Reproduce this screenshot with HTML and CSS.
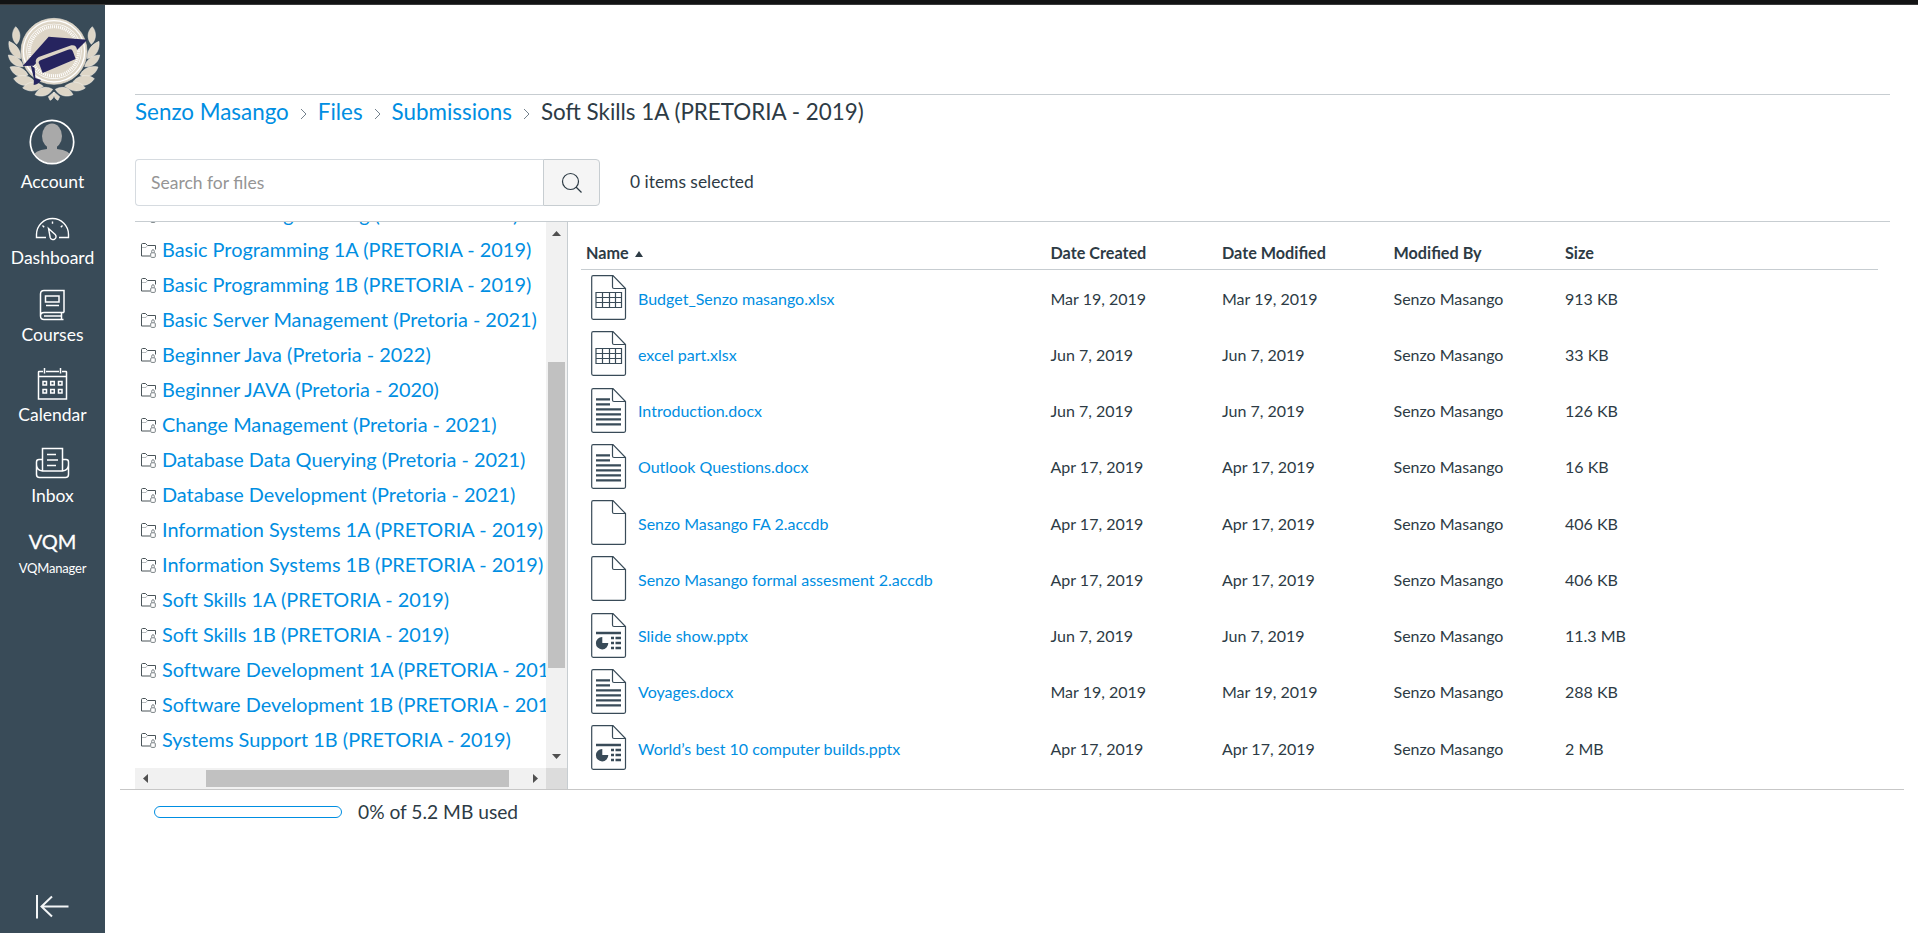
FILE: index.html
```html
<!DOCTYPE html>
<html lang="en">
<head>
<meta charset="utf-8">
<title>Files</title>
<link rel="stylesheet" href="styles.css">
</head>
<body>
<svg width="0" height="0" class="defs">
  <symbol id="folder" viewBox="0 0 15 15"><path d="M9 13H.5V1.700Q.5.5 1.600.5H4.500L6.500 2.500H14.500V6.500" fill="none" stroke="#4a5459"/><path d="M1 4.500H5L6.500 2.500" fill="none" stroke="#9aa1a4" stroke-width=".7"/><rect x="9.700" y="9.800" width="4.600" height="4.600" rx="1" fill="none" stroke="#6a7377" stroke-width=".9"/><path d="M10.700 9.500V8.300a1.300 1.600 0 0 1 2.600 0V9.500" fill="none" stroke="#6a7377" stroke-width=".9"/></symbol>
  <symbol id="page" viewBox="0 0 36 46"><path d="M22 .7H2.200Q.7.7.7 2.200V42.800Q.7 44.300 2.200 44.300H33Q34.500 44.300 34.500 42.800V13.600L22 .7ZM21.500 1V12Q21.500 13.500 23 13.500H34" fill="none" stroke="#394b58" stroke-width="1.200"/></symbol>
  <symbol id="xls" viewBox="0 0 36 46"><use href="#page"/><path d="M5 17.500H31M5 22.500H31M5 27.500H31M5 32.500H31M5 17V33M11.500 17V33M18.500 17V33M24.500 17V33M30.500 17V33" fill="none" stroke="#394b58" stroke-width="1.200"/></symbol>
  <symbol id="doc" viewBox="0 0 36 46"><use href="#page"/><path d="M5 11.300H19M5 16.300H19M5 21.300H30M5 26.300H30M5 31.300H30M5 36.300H30" fill="none" stroke="#394b58" stroke-width="2.300"/></symbol>
  <symbol id="ppt" viewBox="0 0 36 46"><use href="#page"/><path d="M5 20H30" stroke="#394b58" stroke-width="2.500"/><path d="M20 25H23M24.500 25H30M20 30H23M24.500 30H30M20 35H23M24.500 35H30" stroke="#394b58" stroke-width="2.300"/><path d="M11.300 24V30H17.300A6.200 6.200 0 1 1 11.300 24Z" fill="#394b58"/></symbol>
</svg>
<div class="strip"></div>
<div class="app">
  <nav class="side">
    <a class="logo"><svg width="105" height="91" viewBox="0 51 315 273">
      <g fill="#ddd5c6" stroke="#f5f2ec" stroke-width="1.500">
        <g id="half">
          <path d="M50 133C32 117 36 92 47 80C63 94 64 116 50 133Z"/>
          <path d="M62 176C34 171 24 146 27 124C49 133 64 151 62 176Z"/>
          <path d="M70 200C42 202 27 183 25 165C48 166 66 180 70 200Z"/>
          <path d="M84 225C58 238 37 223 30 201C54 196 74 205 84 225Z"/>
          <path d="M105 245C78 266 53 254 41 236C62 220 88 225 105 245Z"/>
          <path d="M130 259C106 278 84 275 68 264C84 242 108 242 130 259Z"/>
          <path d="M158 268C146 290 120 292 105 284C116 262 137 256 158 268Z"/>
          <path d="M162 276C164 290 157 299 150 301L145 290Z"/>
        </g>
        <use href="#half" transform="translate(324 0) scale(-1 1)"/>
      </g>
      <circle cx="162" cy="154" r="99" fill="#ddd5c6" stroke="#e6e0d5" stroke-width="2"/>
      <circle cx="162" cy="154" r="92" fill="none" stroke="#fff" stroke-width="4"/>
      <circle cx="162" cy="154" r="83" fill="#fff"/>
      <circle cx="162" cy="154" r="81" fill="#ddd5c6"/>
      <circle cx="162" cy="154" r="73" fill="none" stroke="#fff" stroke-width="11" stroke-dasharray="3 3"/>
      <circle cx="162" cy="154" r="69" fill="#ddd5c6"/>
      <path d="M68 198L146 110L262 119L231 150Q230 134 214 136L116 171Q104 178 108 190L101 197L68 198Z" fill="#26245f"/>
      <path d="M118 193Q112 184 123 180L204 149Q216 145 219 155L227 177L128 219Z" fill="#26245f"/>
      <path d="M92 196L104 204L106 234L123 240Q116 254 101 255L102 236Z" fill="#26245f"/>
    </svg></a>
    <a class="item account"><svg width="46" height="46" viewBox="0 0 46 46"><defs><clipPath id="av"><circle cx="23" cy="23" r="21"/></clipPath></defs><circle cx="23" cy="23" r="21.700" fill="#394b58"/><g clip-path="url(#av)" fill="#a9a9a9"><ellipse cx="23" cy="17" rx="10" ry="12.500"/><path d="M18 26H28V30Q41 31 43 39V46H3V39Q5 31 18 30Z"/></g><circle cx="23" cy="23" r="21.700" fill="none" stroke="#fff" stroke-width="1.700"/></svg><span>Account</span></a>
    <a class="item dashboard"><svg width="35" height="24" viewBox="0 0 35 24" fill="none" stroke="#fff" stroke-width="1.400"><path d="M11 20.500H1.500V17.500A15.800 15.800 0 0 1 33.500 17.500V20.500H24M17.500 4.500V6.800M7.500 8.500L9.200 10.200M27.500 8.500L25.800 10.200"/><path d="M13.500 11.500L20.200 17.500A3 3 0 1 1 15.200 20.500Z"/></svg><span>Dashboard</span></a>
    <a class="item courses"><svg width="27" height="32" viewBox="0 0 27 32" fill="none" stroke="#fff" stroke-width="1.500"><path d="M25 23.500V1.500H5Q1.500 1.500 1.500 5V27Q1.500 30.500 5 30.500H24.500M25 23.500H5Q1.500 23.500 1.500 27M22.500 23.500V30.500M5 27H22M6.500 7H20V13H6.500ZM7 16.500H20"/></svg><span>Courses</span></a>
    <a class="item calendar"><svg width="31" height="34" viewBox="0 0 31 34" fill="none" stroke="#fff" stroke-width="1.500"><path d="M6 4.500H2Q1.500 4.500 1.500 5V32H29.500V5Q29.500 4.500 29 4.500H25M9 4.500H22M7.500 1V6.500M23.500 1V6.500M1.500 9.500H29.500M6 14.500H9.500V18H6ZM13.700 14.500H17.300V18H13.700ZM21.500 14.500H25V18H21.500ZM6 22.500H9.500V26H6ZM13.700 22.500H17.300V26H13.700ZM21.500 22.500H25V26H21.500Z"/></svg><span>Calendar</span></a>
    <a class="item inbox"><svg width="35" height="32" viewBox="0 0 35 32" fill="none" stroke="#fff" stroke-width="1.500"><path d="M7.500 12.500H4Q1.500 12.500 1.500 15V27.500Q1.500 30.500 4.500 30.500H30.500Q33.500 30.500 33.500 27.500V15Q33.500 12.500 31 12.500H27.500M1.500 18Q2 23.500 7.500 24H27.500Q33 23.500 33.500 18M7.500 24V1.500H27.500V24M12 7.500H21M12 13H23M12 18.500H21"/></svg><span>Inbox</span></a>
    <a class="item vqm"><b>VQM</b><span>VQManager</span></a>
    <a class="collapse"><svg width="36" height="26" viewBox="0 0 36 26" fill="none" stroke="#f3f5f6" stroke-width="2"><path d="M2 1V24.500M33.500 12.500H7M17 2.500L6.500 12.500L17 22.500"/></svg></a>
  </nav>
  <main>
    <div class="crumbs">
      <a>Senzo Masango</a><svg class="chev" viewBox="0 0 7 12"><path d="M1 1L6 6L1 11"/></svg><a>Files</a><svg class="chev" viewBox="0 0 7 12"><path d="M1 1L6 6L1 11"/></svg><a>Submissions</a><svg class="chev" viewBox="0 0 7 12"><path d="M1 1L6 6L1 11"/></svg><span>Soft Skills 1A (PRETORIA - 2019)</span>
    </div>
    <div class="tools">
      <div class="search"><div class="field">Search for files</div><div class="go"><svg width="22" height="22" viewBox="0 0 22 22" fill="none" stroke="#2d3b45" stroke-width="1.200"><circle cx="9.500" cy="9.500" r="8"/><path d="M15 15L20.500 20.500"/></svg></div></div>
      <div class="selected">0 items selected</div>
    </div>
    <div class="files">
      <div class="treebox">
        <div class="treetop">
          <ul class="tree">
            <li><svg><use href="#folder"/></svg><a>Advanced Programming (Pretoria - 2021)</a></li>
            <li><svg><use href="#folder"/></svg><a>Basic Programming 1A (PRETORIA - 2019)</a></li>
            <li><svg><use href="#folder"/></svg><a>Basic Programming 1B (PRETORIA - 2019)</a></li>
            <li><svg><use href="#folder"/></svg><a>Basic Server Management (Pretoria - 2021)</a></li>
            <li><svg><use href="#folder"/></svg><a>Beginner Java (Pretoria - 2022)</a></li>
            <li><svg><use href="#folder"/></svg><a>Beginner JAVA (Pretoria - 2020)</a></li>
            <li><svg><use href="#folder"/></svg><a>Change Management (Pretoria - 2021)</a></li>
            <li><svg><use href="#folder"/></svg><a>Database Data Querying (Pretoria - 2021)</a></li>
            <li><svg><use href="#folder"/></svg><a>Database Development (Pretoria - 2021)</a></li>
            <li><svg><use href="#folder"/></svg><a>Information Systems 1A (PRETORIA - 2019)</a></li>
            <li><svg><use href="#folder"/></svg><a>Information Systems 1B (PRETORIA - 2019)</a></li>
            <li><svg><use href="#folder"/></svg><a>Soft Skills 1A (PRETORIA - 2019)</a></li>
            <li><svg><use href="#folder"/></svg><a>Soft Skills 1B (PRETORIA - 2019)</a></li>
            <li><svg><use href="#folder"/></svg><a>Software Development 1A (PRETORIA - 2019)</a></li>
            <li><svg><use href="#folder"/></svg><a>Software Development 1B (PRETORIA - 2019)</a></li>
            <li><svg><use href="#folder"/></svg><a>Systems Support 1B (PRETORIA - 2019)</a></li>
          </ul>
          <div class="vbar"><svg width="9" height="5"><path d="M0 5L4.500 0L9 5Z"/></svg><i></i><svg class="end" width="9" height="5"><path d="M0 0L4.500 5L9 0Z"/></svg></div>
        </div>
        <div class="hrow"><div class="hbar"><svg width="5" height="9"><path d="M5 0L0 4.500L5 9Z"/></svg><i></i><svg class="end" width="5" height="9"><path d="M0 0L5 4.500L0 9Z"/></svg></div><div class="corner"></div></div>
      </div>
      <div class="table">
        <div class="row head"><div class="name">Name<svg width="8" height="6"><path d="M0 6L4 0L8 6Z"/></svg></div><div>Date Created</div><div>Date Modified</div><div>Modified By</div><div>Size</div></div>
        <div class="row"><div class="name"><svg><use href="#xls"/></svg><a>Budget_Senzo masango.xlsx</a></div><div>Mar 19, 2019</div><div>Mar 19, 2019</div><div>Senzo Masango</div><div>913 KB</div></div>
        <div class="row"><div class="name"><svg><use href="#xls"/></svg><a>excel part.xlsx</a></div><div>Jun 7, 2019</div><div>Jun 7, 2019</div><div>Senzo Masango</div><div>33 KB</div></div>
        <div class="row"><div class="name"><svg><use href="#doc"/></svg><a>Introduction.docx</a></div><div>Jun 7, 2019</div><div>Jun 7, 2019</div><div>Senzo Masango</div><div>126 KB</div></div>
        <div class="row"><div class="name"><svg><use href="#doc"/></svg><a>Outlook Questions.docx</a></div><div>Apr 17, 2019</div><div>Apr 17, 2019</div><div>Senzo Masango</div><div>16 KB</div></div>
        <div class="row"><div class="name"><svg><use href="#page"/></svg><a>Senzo Masango FA 2.accdb</a></div><div>Apr 17, 2019</div><div>Apr 17, 2019</div><div>Senzo Masango</div><div>406 KB</div></div>
        <div class="row"><div class="name"><svg><use href="#page"/></svg><a>Senzo Masango formal assesment 2.accdb</a></div><div>Apr 17, 2019</div><div>Apr 17, 2019</div><div>Senzo Masango</div><div>406 KB</div></div>
        <div class="row"><div class="name"><svg><use href="#ppt"/></svg><a>Slide show.pptx</a></div><div>Jun 7, 2019</div><div>Jun 7, 2019</div><div>Senzo Masango</div><div>11.3 MB</div></div>
        <div class="row"><div class="name"><svg><use href="#doc"/></svg><a>Voyages.docx</a></div><div>Mar 19, 2019</div><div>Mar 19, 2019</div><div>Senzo Masango</div><div>288 KB</div></div>
        <div class="row"><div class="name"><svg><use href="#ppt"/></svg><a>World’s best 10 computer builds.pptx</a></div><div>Apr 17, 2019</div><div>Apr 17, 2019</div><div>Senzo Masango</div><div>2 MB</div></div>
      </div>
    </div>
    <footer><div class="meter"></div><span>0% of 5.2 MB used</span></footer>
  </main>
</div>
</body>
</html>
```
FILE: styles.css
```css
* { box-sizing: border-box; }
body { margin: 0; height: 933px; overflow: hidden; background: #fff; color: #2d3b45; font-family: Lato, sans-serif; display: flex; flex-direction: column; }
svg { display: block; flex: none; }
a { color: #008ee2; }
.defs { position: absolute; }
.strip { height: 5px; background: #121314; border-bottom: 1px solid #3a3b3c; }
.app { display: flex; height: 928px; }
.side { width: 105px; background: #394b58; display: flex; flex-direction: column; align-items: center; }
.side a { color: #fff; }
.logo { margin-top: 12px; height: 91px; }
.item { display: flex; flex-direction: column; align-items: center; font-size: 17.500px; line-height: 22px; }
.item span { margin-top: auto; }
.account { height: 74px; margin-top: 11px; }
.dashboard { height: 52px; margin-top: 24px; }
.courses { height: 57px; margin-top: 20px; }
.calendar { height: 59px; margin-top: 21px; }
.inbox { height: 60px; margin-top: 21px; }
.vqm { height: 51px; margin-top: 19px; font-size: 13px; }
.vqm b { font-size: 20px; line-height: 26px; font-weight: 400; -webkit-text-stroke: .3px #fff; margin-top: 2px; }
.vqm span { line-height: 18px; letter-spacing: -.2px; }
.collapse { margin: auto 0 13px; }
main { flex: 1; padding: 89px 14px 0 15px; }
.crumbs { margin: 0 14px 0 15px; border-top: 1px solid #c7cdd1; height: 65px; display: flex; font-size: 22.400px; line-height: 34px; white-space: nowrap; }
.chev { width: 7px; height: 12px; margin: 13px 11px 0; }
.chev path { fill: none; stroke: #73818c; stroke-width: 1; }
.tools { margin: 0 14px 0 15px; height: 63px; border-bottom: 1px solid #c7cdd1; display: flex; }
.search { width: 465px; height: 47px; display: flex; }
.field { width: 408px; border: 1px solid #d6dbe0; border-right: 0; border-radius: 4px 0 0 4px; color: #959595; font-size: 17.500px; line-height: 45px; padding-left: 15px; }
.go { flex: 1; border: 1px solid #c7cdd1; border-radius: 0 4px 4px 0; background: #f5f5f5; display: flex; align-items: center; justify-content: center; }
.selected { margin-left: 30px; font-size: 17.400px; line-height: 45px; }
.files { height: 568px; padding-left: 15px; display: flex; border-bottom: 1px solid #c7c7c7; }
.treebox { width: 433px; border-right: 1px solid #c7cdd1; display: flex; flex-direction: column; overflow: hidden; }
.treetop { height: 546px; display: flex; }
.tree { width: 411px; height: 546px; overflow: hidden; margin: 0; padding: 0 0 11px; list-style: none; font-size: 19.900px; font-variant-ligatures: none; white-space: nowrap; display: flex; flex-direction: column; justify-content: flex-end; }
.tree li { height: 35px; flex: none; display: flex; line-height: 35px; padding-left: 6px; }
.tree svg { width: 15px; height: 15px; margin: 11px 6px 0 0; }
.vbar { width: 21px; background: #f1f1f1; padding: 9px 2px; display: flex; flex-direction: column; align-items: center; fill: #505050; }
.vbar i { width: 17px; height: 306px; margin-top: 126px; background: #c1c1c1; }
.end { margin: auto 0 0; }
.hrow { height: 21px; display: flex; }
.hbar { width: 411px; background: #f1f1f1; padding: 2px 8px; display: flex; align-items: center; fill: #505050; }
.hbar i { width: 303px; height: 17px; margin-left: 58px; background: #c1c1c1; }
.hbar .end { margin: 0 0 0 auto; }
.corner { width: 21px; background: #dcdcdc; }
.table { margin: 11px 26px 0 13px; flex: 1; }
.row { display: grid; grid-template-columns: 469.500px 171.500px 171.500px 171.500px 1fr; height: 56.250px; align-items: center; font-size: 16px; }
.name { display: flex; align-items: center; padding-left: 10px; }
.name a { font-variant-ligatures: none; }
.name svg { width: 36px; height: 46px; margin-right: 11px; }
.head { height: 37px; border-bottom: 1px solid #c7cdd1; font-weight: 700; padding-top: 2px; font-size: 16.200px; }
.head .name { padding-left: 5px; }
.head svg { width: 8px; height: 6px; margin: 3px 0 0 6px; fill: #2d3b45; }
footer { display: flex; align-items: center; height: 43px; padding-left: 34px; font-size: 19.200px; }
.meter { width: 188px; height: 12px; border: 1px solid #008ee2; border-radius: 6px; margin-right: 16px; }
```
